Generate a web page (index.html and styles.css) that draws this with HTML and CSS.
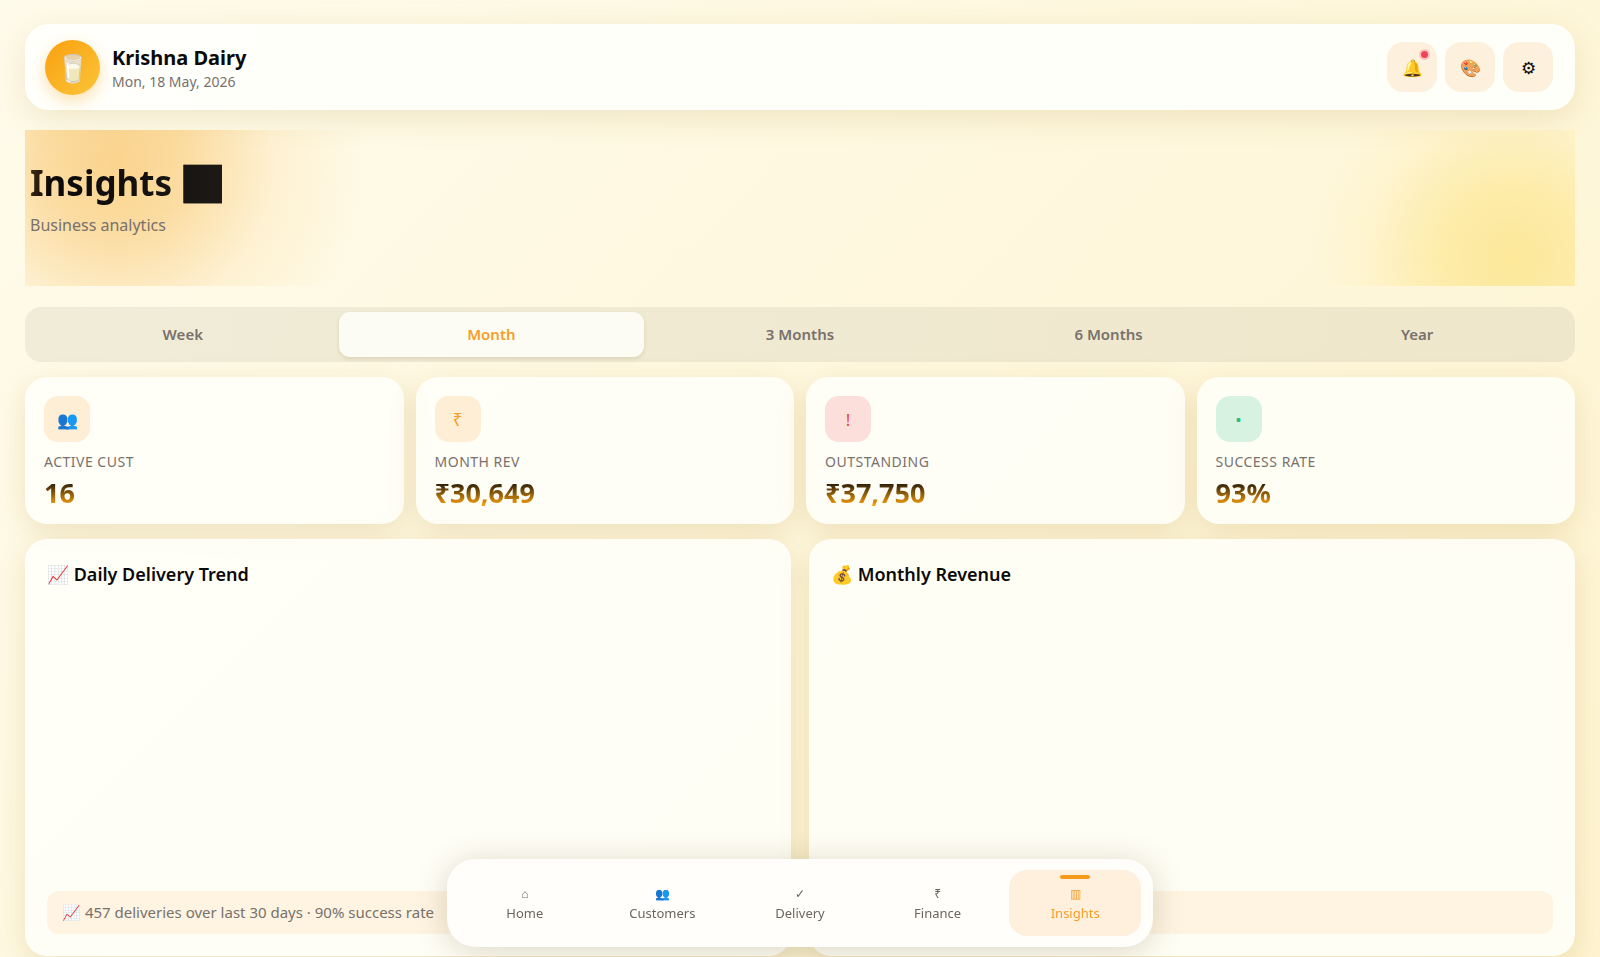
FILE: index.html
```html
<!DOCTYPE html>
<html lang="en">
<head>
<meta charset="utf-8">
<title>Krishna Dairy – Insights</title>
<meta name="viewport" content="width=device-width, initial-scale=1">
<link rel="stylesheet" href="styles.css">
</head>
<body>
<div class="page">
  <header class="topbar">
    <div class="logo" aria-hidden="true">🥛</div>
    <div class="brand">
      <div class="brand-name">Krishna Dairy</div>
      <div class="brand-date">Mon, 18 May, 2026</div>
    </div>
    <div class="actions">
      <button class="icon-btn" type="button" aria-label="Notifications">🔔<span class="dot"></span></button>
      <button class="icon-btn" type="button" aria-label="Theme">🎨</button>
      <button class="icon-btn" type="button" aria-label="Settings">⚙</button>
    </div>
  </header>

  <section class="hero">
    <h1 class="hero-title">Insights 📊</h1>
    <p class="hero-sub">Business analytics</p>
  </section>

  <div class="tabs" role="tablist">
    <button class="tab" type="button" role="tab">Week</button>
    <button class="tab tab-active" type="button" role="tab" aria-selected="true">Month</button>
    <button class="tab" type="button" role="tab">3 Months</button>
    <button class="tab" type="button" role="tab">6 Months</button>
    <button class="tab" type="button" role="tab">Year</button>
  </div>

  <section class="stats">
    <article class="card stat">
      <div class="stat-icon amber">👥</div>
      <div class="stat-label">Active Cust</div>
      <div class="stat-value">16</div>
    </article>
    <article class="card stat">
      <div class="stat-icon amber">₹</div>
      <div class="stat-label">Month Rev</div>
      <div class="stat-value">₹30,649</div>
    </article>
    <article class="card stat">
      <div class="stat-icon red">!</div>
      <div class="stat-label">Outstanding</div>
      <div class="stat-value">₹37,750</div>
    </article>
    <article class="card stat">
      <div class="stat-icon green">•</div>
      <div class="stat-label">Success Rate</div>
      <div class="stat-value">93%</div>
    </article>
  </section>

  <section class="panels">
    <article class="card panel">
      <h2 class="panel-title">📈 Daily Delivery Trend</h2>
      <div class="chart"></div>
      <p class="note">📈 457 deliveries over last 30 days · 90% success rate</p>
    </article>
    <article class="card panel">
      <h2 class="panel-title">💰 Monthly Revenue</h2>
      <div class="chart"></div>
      <p class="note"></p>
    </article>
  </section>
</div>

<nav class="bottom-nav">
  <a class="nav-item" href="#home"><span class="nav-icon">⌂</span>Home</a>
  <a class="nav-item" href="#customers"><span class="nav-icon">👥</span>Customers</a>
  <a class="nav-item" href="#delivery"><span class="nav-icon">✓</span>Delivery</a>
  <a class="nav-item" href="#finance"><span class="nav-icon">₹</span>Finance</a>
  <a class="nav-item nav-active" href="#insights" aria-current="page"><span class="nav-icon">▥</span>Insights</a>
</nav>
</body>
</html>
```
FILE: styles.css
```css
* { box-sizing: border-box; margin: 0; }

body {
  min-height: 100vh;
  font-family: "Noto Sans", sans-serif;
  color: #0c0a09;
  background: linear-gradient(135deg, #fffbeb 0%, #fef4d0 100%);
}

button { font: inherit; border: 0; cursor: pointer; }

.page {
  display: flex;
  flex-direction: column;
  padding: 24px 25px 0;
}

.topbar {
  display: flex;
  align-items: center;
  gap: 12px;
  height: 86px;
  padding: 0 22px 0 20px;
  border-radius: 24px;
  background: rgba(255, 255, 252, 0.92);
  box-shadow: 0 8px 32px rgba(161, 128, 30, 0.16);
}

.logo {
  display: grid;
  place-items: center;
  width: 55px;
  height: 55px;
  border-radius: 50%;
  font-size: 27px;
  background: linear-gradient(135deg, #f9a010, #fbc538);
  box-shadow: 0 6px 16px rgba(245, 158, 11, 0.3);
}

.brand { padding-top: 4px; }
.brand-name { font-size: 20px; line-height: 26px; font-weight: 700; }
.brand-date { font-size: 14px; line-height: 22px; color: #78716c; }

.actions { display: flex; gap: 8px; margin-left: auto; }

.icon-btn {
  position: relative;
  width: 50px;
  height: 50px;
  padding: 0;
  border-radius: 16px;
  font-size: 17px;
  color: #0c0a09;
  background: #fdf1de;
}

.dot {
  position: absolute;
  top: 9px;
  right: 9px;
  width: 7px;
  height: 7px;
  border-radius: 50%;
  background: #ef4458;
  box-shadow: 0 0 0 2px rgba(244, 114, 140, 0.35);
}

.hero {
  height: 156px;
  margin-top: 20px;
  padding: 29px 5px 0;
  background:
    radial-gradient(circle at 90px 30px, rgba(245, 166, 35, 0.46) 0, rgba(245, 166, 35, 0.36) 70px, rgba(245, 166, 35, 0.1) 160px, transparent 250px),
    radial-gradient(circle at calc(100% - 62px) 128px, rgba(251, 218, 90, 0.5) 0, rgba(251, 218, 90, 0.36) 75px, rgba(251, 218, 90, 0.1) 145px, transparent 200px);
}

.hero-title {
  width: fit-content;
  font-size: 35px;
  line-height: 48px;
  font-weight: 700;
  color: transparent;
  background: linear-gradient(100deg, #46330f 0, #0c0a09 24px, #1c1917 100%);
  background-clip: text;
  -webkit-background-clip: text;
}

.hero-sub { margin-top: 6px; font-size: 16px; line-height: 24px; color: #78716c; }

.tabs {
  display: grid;
  grid-template-columns: repeat(5, 1fr);
  gap: 3px;
  margin-top: 21px;
  padding: 5px;
  border-radius: 16px;
  background: linear-gradient(100deg, #f1ecd8, #efe7cb);
}

.tab {
  height: 45px;
  padding: 0 0 2px;
  border-radius: 11px;
  font-size: 15px;
  font-weight: 600;
  color: #78716c;
  background: transparent;
}

.tab-active {
  color: #f59e2a;
  background: #fdfcf4;
  box-shadow: 0 2px 4px rgba(120, 100, 40, 0.16);
}

.card {
  border-radius: 22px;
  background: rgba(255, 255, 250, 0.84);
  box-shadow: 0 8px 28px rgba(161, 120, 20, 0.17);
}

.stats {
  display: grid;
  grid-template-columns: repeat(4, 1fr);
  gap: 12px;
  margin-top: 15px;
}

.stat { height: 147px; padding: 19px; }

.stat-icon {
  display: grid;
  place-items: center;
  width: 46px;
  height: 46px;
  border-radius: 14px;
  font-size: 17px;
}

.amber { color: #f59e2a; background: #feeed5; }
.red { color: #ef4444; background: #fcdfda; }
.green { color: #22c07e; background: #d8f2e1; }

.stat-label {
  margin-top: 9px;
  font-size: 14px;
  line-height: 22px;
  letter-spacing: 0.5px;
  text-transform: uppercase;
  color: #78716c;
}

.stat-value {
  width: fit-content;
  margin-top: 4px;
  font-size: 27px;
  line-height: 31px;
  font-weight: 700;
  color: transparent;
  background: linear-gradient(180deg, #0c0a09 10%, #f59e0b 90%);
  background-clip: text;
  -webkit-background-clip: text;
}

.panels {
  display: grid;
  grid-template-columns: 1fr 1fr;
  gap: 18px;
  margin-top: 15px;
}

.panel { padding: 22px; }
.panel-title { font-size: 18px; line-height: 26px; font-weight: 600; }
.chart { height: 304px; }

.note {
  height: 43px;
  padding: 0 15px;
  border-radius: 12px;
  font-size: 15px;
  line-height: 43px;
  color: #78716c;
  background: #fef4e1;
}

.bottom-nav {
  position: fixed;
  bottom: 10px;
  left: 50%;
  transform: translateX(-50%);
  display: grid;
  grid-template-columns: repeat(5, 1fr);
  gap: 6px;
  width: 706px;
  max-width: calc(100% - 24px);
  padding: 11px 12px;
  border-radius: 28px;
  background: #fffefb;
  box-shadow: 0 4px 32px rgba(90, 75, 30, 0.22);
}

.nav-item {
  position: relative;
  display: flex;
  flex-direction: column;
  align-items: center;
  height: 66px;
  padding-top: 15px;
  border-radius: 18px;
  font-size: 13px;
  line-height: 20px;
  text-decoration: none;
  color: #6b6560;
}

.nav-icon { font-size: 12px; line-height: 18px; }

.nav-active { color: #f59e2a; background: #fef0dc; }

.nav-active::before {
  content: "";
  position: absolute;
  top: 5px;
  width: 30px;
  height: 4px;
  border-radius: 2px;
  background: #f59a1b;
}
```
